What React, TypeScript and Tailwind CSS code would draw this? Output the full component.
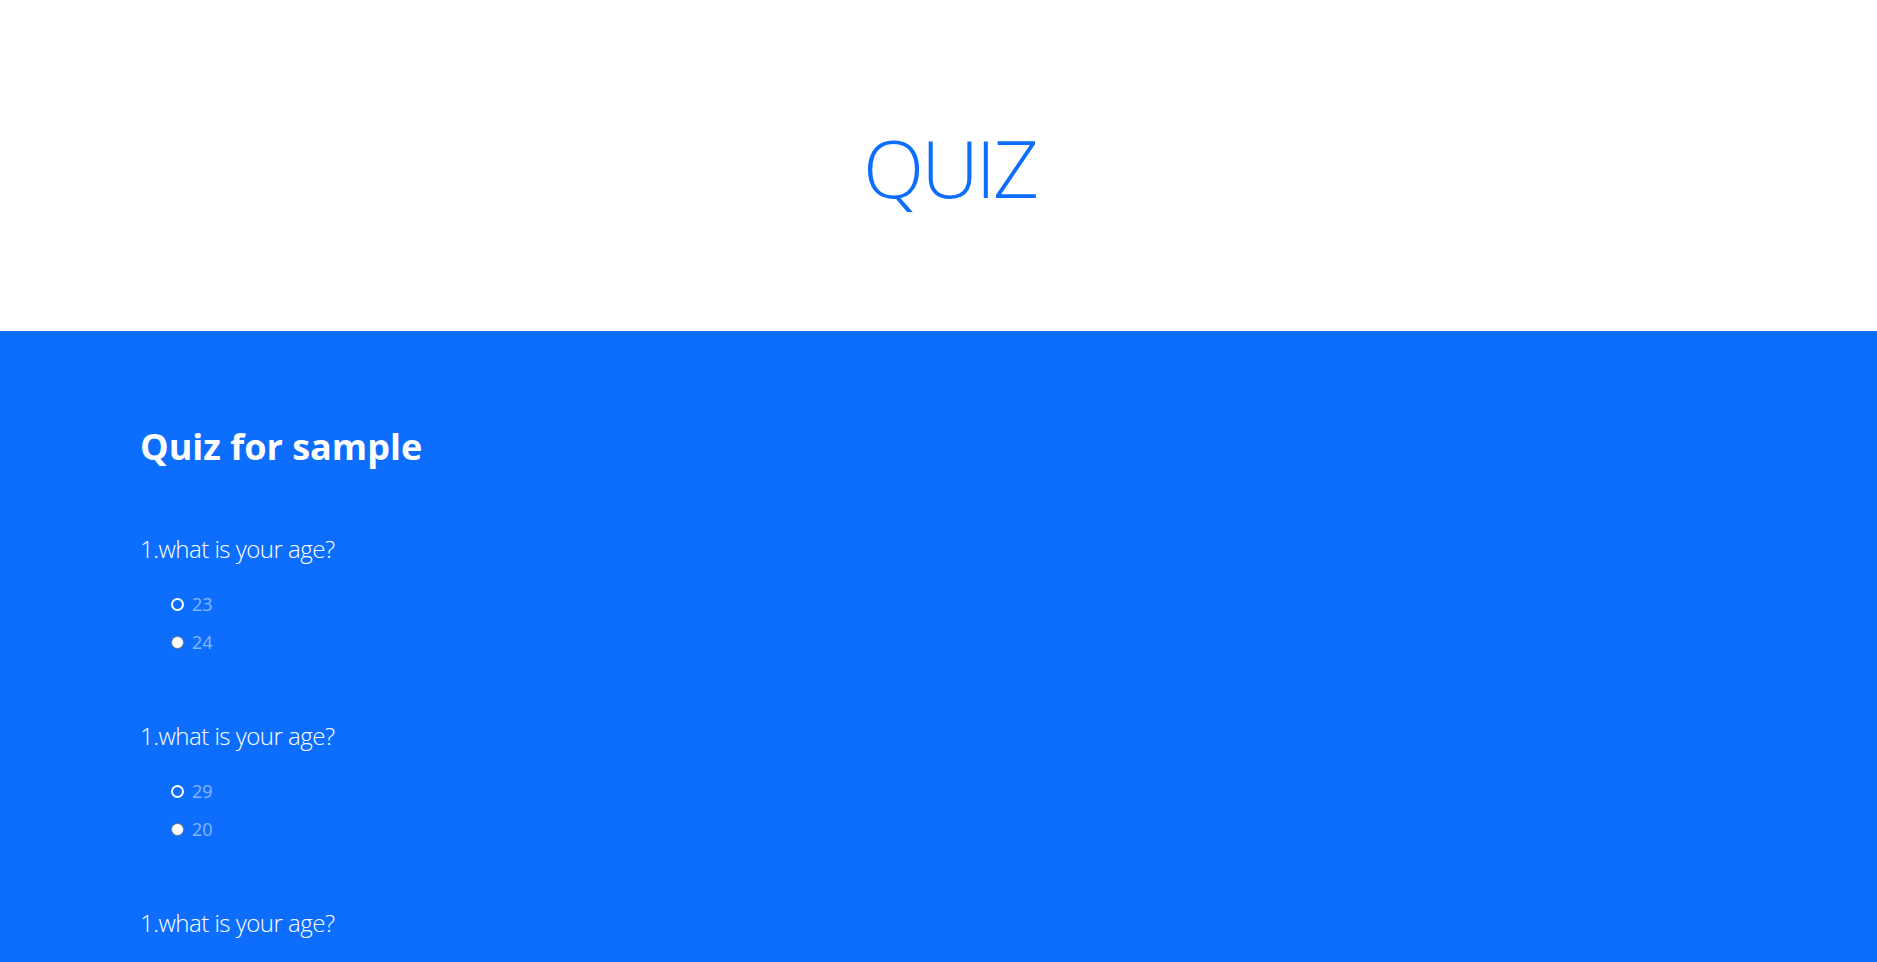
import React from 'react';

const questions = [
  { text: '1.what is your age?', options: ['23', '24'] },
  { text: '1.what is your age?', options: ['29', '20'] },
  { text: '1.what is your age?', options: ['31', '32'] },
];

function Radio({ checked }: { checked: boolean }) {
  // first option is drawn as the selected/focused ring, second as a plain unchecked radio
  return checked ? (
    <span className="block w-[13px] h-[13px] rounded-full border-2 border-white bg-[#0d6efd]" />
  ) : (
    <span className="block w-[13px] h-[13px] rounded-full border border-[#767676] bg-white" />
  );
}

function Question({ text, options }: { text: string; options: string[] }) {
  return (
    <div className="mb-[62px]">
      <p className="text-[24px] leading-[36px] font-light tracking-[-0.5px] text-white">{text}</p>
      <div className="mt-[24px] flex flex-col gap-[11px] pl-[31px]">
        {options.map((opt, i) => (
          <label key={opt} className="flex items-center gap-[8px] h-[27px]">
            <Radio checked={i === 0} />
            <span className="text-[18px] leading-[27px] text-white/50">{opt}</span>
          </label>
        ))}
      </div>
    </div>
  );
}

export default function App() {
  return (
    <div className="min-h-screen bg-[#0d6efd] font-['Open_Sans',sans-serif]">
      {/* Header */}
      <header className="h-[331px] bg-white pt-[119px] pl-[22px] text-center">
        <h1 className="text-[80px] leading-[96px] font-light tracking-[-3px] text-[#0d6efd]">QUIZ</h1>
      </header>

      {/* Quiz body */}
      <section className="bg-[#0d6efd] px-[140px] pt-[94px]">
        <h2 className="text-[36px] leading-[43px] font-bold text-white mb-[63px]">Quiz for sample</h2>
        {questions.map((q, i) => (
          <Question key={i} text={q.text} options={q.options} />
        ))}
      </section>
    </div>
  );
}
